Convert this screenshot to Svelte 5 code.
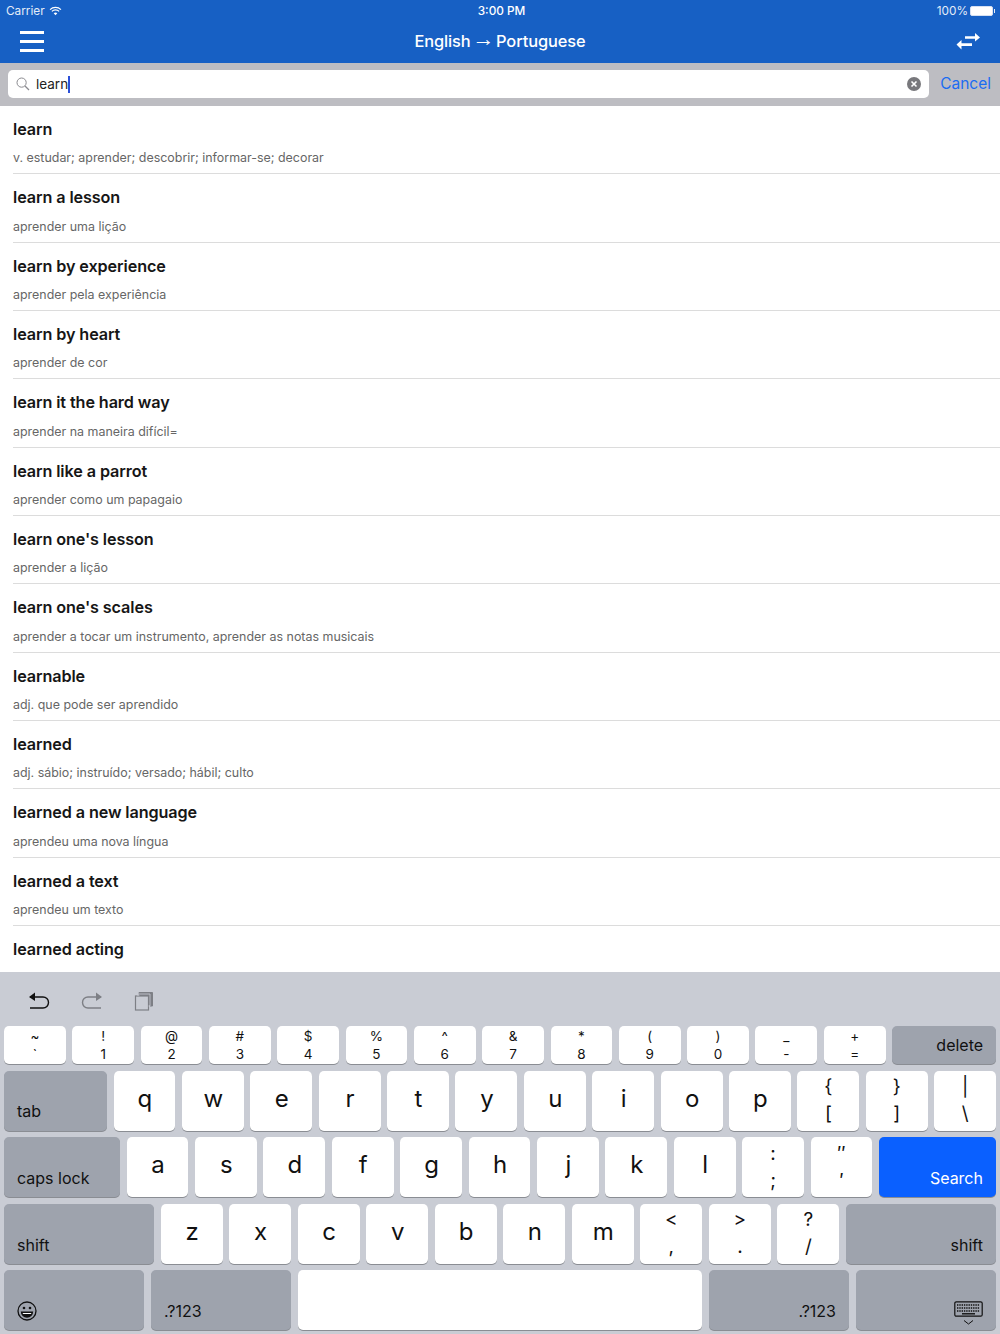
<script>
	const results = [
		['learn', 'v. estudar; aprender; descobrir; informar-se; decorar'],
		['learn a lesson', 'aprender uma lição'],
		['learn by experience', 'aprender pela experiência'],
		['learn by heart', 'aprender de cor'],
		['learn it the hard way', 'aprender na maneira difícil='],
		['learn like a parrot', 'aprender como um papagaio'],
		["learn one's lesson", 'aprender a lição'],
		["learn one's scales", 'aprender a tocar um instrumento, aprender as notas musicais'],
		['learnable', 'adj. que pode ser aprendido'],
		['learned', 'adj. sábio; instruído; versado; hábil; culto'],
		['learned a new language', 'aprendeu uma nova língua'],
		['learned a text', 'aprendeu um texto'],
		['learned acting', '']
	];

	const numberRow = [
		['~', '`'], ['!', '1'], ['@', '2'], ['#', '3'], ['$', '4'], ['%', '5'], ['^', '6'],
		['&', '7'], ['*', '8'], ['(', '9'], [')', '0'], ['_', '-'], ['+', '=']
	];
	const qRow = ['q', 'w', 'e', 'r', 't', 'y', 'u', 'i', 'o', 'p'];
	const qPairs = [['{', '['], ['}', ']'], ['|', '\\']];
	const aRow = ['a', 's', 'd', 'f', 'g', 'h', 'j', 'k', 'l'];
	const aPairs = [[':', ';'], ['″', '′']];
	const zRow = ['z', 'x', 'c', 'v', 'b', 'n', 'm'];
	const zPairs = [['<', ','], ['>', '.'], ['?', '/']];
</script>

{#snippet pairKey(pair)}
	<div class="key pair"><span>{pair[0]}</span><span>{pair[1]}</span></div>
{/snippet}

<div class="screen">
	<header class="top">
		<div class="status">
			<div class="carrier">
				Carrier
				<svg width="13" height="10" viewBox="0 0 14 11">
					<path d="M1 4 A8.5 8.5 0 0 1 13 4" fill="none" stroke="#fff" stroke-width="1.3" />
					<path d="M3 6 A5.6 5.6 0 0 1 11 6" fill="none" stroke="#fff" stroke-width="1.3" />
					<path d="M5 8 A3 3 0 0 1 9 8 L7 10.2 Z" fill="#fff" />
				</svg>
			</div>
			<div class="clock">3:00 PM</div>
			<div class="power">
				100%
				<span class="battery"></span>
			</div>
		</div>
		<nav class="nav">
			<div class="burger"><i></i><i></i><i></i></div>
			<div class="title">English <span class="arrow">→</span> Portuguese</div>
			<svg class="swap" width="24" height="17" viewBox="0 0 24 17">
				<path d="M9 3.2 H19 V0 L24 4.4 L19 8.6 V5.8 H9 Z" fill="#fff" />
				<path d="M16 10.2 H5.5 V7 L0.5 11.6 L5.5 16.6 V13 H16 Z" fill="#fff" />
			</svg>
		</nav>
	</header>

	<div class="searchbar">
		<div class="field">
			<svg width="14" height="14" viewBox="0 0 14 14">
				<circle cx="5.6" cy="5.6" r="4.6" fill="none" stroke="#8a8a8f" stroke-width="1" />
				<path d="M9 9 L13 13" stroke="#8a8a8f" stroke-width="1.2" />
			</svg>
			<span class="query">learn</span><span class="caret"></span>
			<svg class="clear" width="14" height="14" viewBox="0 0 14 14">
				<circle cx="7" cy="7" r="7" fill="#78787c" />
				<path d="M4.5 4.5 L9.5 9.5 M9.5 4.5 L4.5 9.5" stroke="#fff" stroke-width="1.6" />
			</svg>
		</div>
		<div class="cancel">Cancel</div>
	</div>

	<ul class="results">
		{#each results as [word, meaning]}
			<li>
				<div class="word">{word}</div>
				<div class="meaning">{meaning}</div>
			</li>
		{/each}
	</ul>

	<section class="keyboard">
		<div class="tools">
			<svg width="22" height="20" viewBox="0 0 22 20">
				<path d="M2 6 H15 A5.5 5.5 0 0 1 15 17 H2" fill="none" stroke="#111" stroke-width="1.4" />
				<path d="M1 6 L7 1.5 V10 Z" fill="#111" />
			</svg>
			<svg width="22" height="20" viewBox="0 0 22 20">
				<path d="M20 6 H7 A5.5 5.5 0 0 0 7 17 H20" fill="none" stroke="#7d7f85" stroke-width="1.4" />
				<path d="M21 6 L15 1.5 V10 Z" fill="#7d7f85" />
			</svg>
			<svg width="20" height="20" viewBox="0 0 20 20">
				<path d="M5 4 V1.5 H18.5 V15 H16" fill="#7d7f85" stroke="#7d7f85" stroke-width="1" />
				<rect x="1.5" y="5" width="13" height="14" fill="#c9ccd4" stroke="#7d7f85" stroke-width="1.2" />
				<path d="M4 5 V3 H16 V15 H14.5" fill="none" stroke="#c9ccd4" stroke-width="0.8" />
			</svg>
		</div>

		<div class="row numbers">
			{#each numberRow as pair}
				<div class="key pair small"><span>{pair[0]}</span><span>{pair[1]}</span></div>
			{/each}
			<div class="key dark end delete">delete</div>
		</div>

		<div class="row tall">
			<div class="key dark start tab">tab</div>
			{#each qRow as letter}
				<div class="key letter">{letter}</div>
			{/each}
			{#each qPairs as pair}
				{@render pairKey(pair)}
			{/each}
		</div>

		<div class="row tall">
			<div class="key dark start caps">caps lock</div>
			{#each aRow as letter}
				<div class="key letter">{letter}</div>
			{/each}
			{#each aPairs as pair}
				{@render pairKey(pair)}
			{/each}
			<div class="key dark end search">Search</div>
		</div>

		<div class="row tall">
			<div class="key dark start shift">shift</div>
			{#each zRow as letter}
				<div class="key letter">{letter}</div>
			{/each}
			{#each zPairs as pair}
				{@render pairKey(pair)}
			{/each}
			<div class="key dark end shift">shift</div>
		</div>

		<div class="row tall bottom">
			<div class="key dark start wide">
				<svg width="20" height="20" viewBox="0 0 20 20">
					<circle cx="10" cy="10" r="9" fill="none" stroke="#111" stroke-width="1.3" />
					<circle cx="7" cy="7" r="1.3" fill="#111" />
					<circle cx="13" cy="7" r="1.3" fill="#111" />
					<path d="M3.8 10.5 H16.2 A6.2 6.2 0 0 1 3.8 10.5 Z" fill="#111" />
					<path d="M5.5 12 H14.5 L13.8 13 H6.2 Z" fill="#fff" />
				</svg>
			</div>
			<div class="key dark start wide">.?123</div>
			<div class="key space"></div>
			<div class="key dark end wide">.?123</div>
			<div class="key dark end wide hide">
				<svg width="29" height="26" viewBox="0 0 29 26">
					<rect x="0.8" y="0.8" width="27.4" height="14.4" rx="1.5" fill="none" stroke="#111" stroke-width="1.2" />
					<path d="M3 4 H26 M3 7 H26 M3 10 H26" stroke="#111" stroke-width="1.6" stroke-dasharray="1.4 0.9" />
					<path d="M8 12.8 H21" stroke="#111" stroke-width="1.4" />
					<path d="M10 19.5 L14.5 23 L19 19.5" fill="none" stroke="#111" stroke-width="1" />
				</svg>
			</div>
		</div>
	</section>
</div>

<style>
	:global(body) {
		background: #fff;
	}

	.screen {
		width: 1000px;
		height: 1334px;
		display: flex;
		flex-direction: column;
		overflow: hidden;
		font-family: Inter, "Liberation Sans", sans-serif;
		color: #111;
	}

	.top {
		height: 63px;
		flex: none;
		background: #1760c4;
		color: #fff;
	}

	.status {
		height: 20px;
		box-sizing: border-box;
		padding: 1px 6px 0;
		display: grid;
		grid-template-columns: 1fr auto 1fr;
		align-items: center;
		font-size: 11.8px;
		color: #e4ecf8;
	}

	.carrier {
		display: flex;
		align-items: center;
		gap: 4px;
	}

	.clock {
		font-weight: 500;
		padding-left: 3px;
		color: #fff;
	}

	.power {
		justify-self: end;
		display: flex;
		align-items: center;
		gap: 2px;
		margin-right: -1px;
	}

	.battery {
		width: 23px;
		height: 10px;
		border: 1px solid #d5e0f2;
		border-radius: 2px;
		box-sizing: border-box;
		margin-right: 2px;
		background: #fff;
		position: relative;
	}

	.battery::after {
		content: "";
		position: absolute;
		right: -3px;
		top: 2px;
		width: 1.5px;
		height: 4px;
		background: #e4ecf8;
	}

	.nav {
		height: 43px;
		padding: 0 20px;
		display: flex;
		align-items: center;
		justify-content: space-between;
	}

	.burger {
		width: 24px;
		display: flex;
		flex-direction: column;
		gap: 6px;
	}

	.burger i {
		display: block;
		height: 3px;
		background: #fff;
	}

	.title {
		font-size: 16.4px;
		font-weight: 500;
		letter-spacing: -0.1px;
		line-height: 20px;
		padding-bottom: 2px;
	}

	.arrow {
		font-family: "Liberation Sans", sans-serif;
		font-weight: 400;
		font-size: 22px;
		line-height: 0;
		margin: 0 -2.5px;
		vertical-align: 1px;
	}

	.searchbar {
		height: 43px;
		flex: none;
		box-sizing: border-box;
		background: #bdbdc2;
		padding: 7px 9px 8px 8px;
		display: flex;
		align-items: stretch;
		gap: 11px;
	}

	.field {
		flex: 1;
		background: #fff;
		border-radius: 5px;
		display: flex;
		align-items: center;
		padding: 0 8px;
	}

	.query {
		margin-left: 6px;
		font-size: 13.5px;
		color: #222;
	}

	.caret {
		width: 2px;
		height: 17px;
		background: #2c50d8;
	}

	.clear {
		margin-left: auto;
	}

	.cancel {
		align-self: center;
		font-size: 15.5px;
		color: #1b6cf2;
		padding-bottom: 1px;
	}

	.results {
		flex: 1;
		min-height: 0;
		margin: 0;
		padding: 0;
		list-style: none;
		overflow: hidden;
	}

	li {
		height: 68.33px;
		box-sizing: border-box;
		margin-left: 13px;
		padding-top: 13px;
		border-bottom: 1px solid #dcdcdc;
	}

	.word {
		font-size: 16.2px;
		font-weight: 600;
		line-height: 20px;
		letter-spacing: -0.1px;
		color: #161616;
	}

	.meaning {
		margin-top: 10.4px;
		font-size: 12.45px;
		line-height: 18px;
		color: #666;
	}

	.keyboard {
		height: 362px;
		flex: none;
		box-sizing: border-box;
		background: #c9ccd4;
		padding: 0 4px;
		display: flex;
		flex-direction: column;
		gap: 6.6px;
	}

	.tools {
		height: 47.4px;
		flex: none;
		padding: 19px 0 0 24px;
		box-sizing: border-box;
		display: flex;
		align-items: flex-start;
		gap: 31px;
	}

	.row {
		display: flex;
		gap: 6.5px;
	}

	.numbers {
		height: 38px;
	}

	.tall {
		height: 60px;
	}

	.bottom {
		gap: 7px;
	}

	.key {
		flex: 1 1 0;
		min-width: 0;
		box-sizing: border-box;
		background: #fff;
		border-radius: 5px;
		box-shadow: 0 1px 0 #8a8d93;
		display: flex;
		align-items: center;
		justify-content: center;
	}

	.letter {
		font-size: 24px;
		padding-bottom: 5px;
		text-indent: 1px;
	}

	.pair {
		flex-direction: column;
		font-size: 19px;
		line-height: 24px;
		gap: 3px;
	}

	.pair.small {
		font-size: 13.5px;
		line-height: 16px;
		gap: 2px;
	}

	.dark {
		background: #9ea3ad;
		font-size: 16px;
		padding: 0 13px 9px;
		align-items: flex-end;
		flex: none;
	}

	.start {
		justify-content: flex-start;
	}

	.end {
		justify-content: flex-end;
	}

	.delete {
		width: 104px;
		align-items: center;
		padding: 0 13px 0 0;
	}

	.tab {
		width: 103px;
		padding-bottom: 10px;
	}

	.caps {
		width: 116px;
	}

	.search {
		width: 117px;
		background: #0a60ff;
		color: #fff;
	}

	.shift {
		width: 150px;
	}

	.wide {
		width: 140px;
	}

	.space {
		flex: 1;
	}

	.hide {
		padding: 0 13px 3px 0;
	}
</style>
